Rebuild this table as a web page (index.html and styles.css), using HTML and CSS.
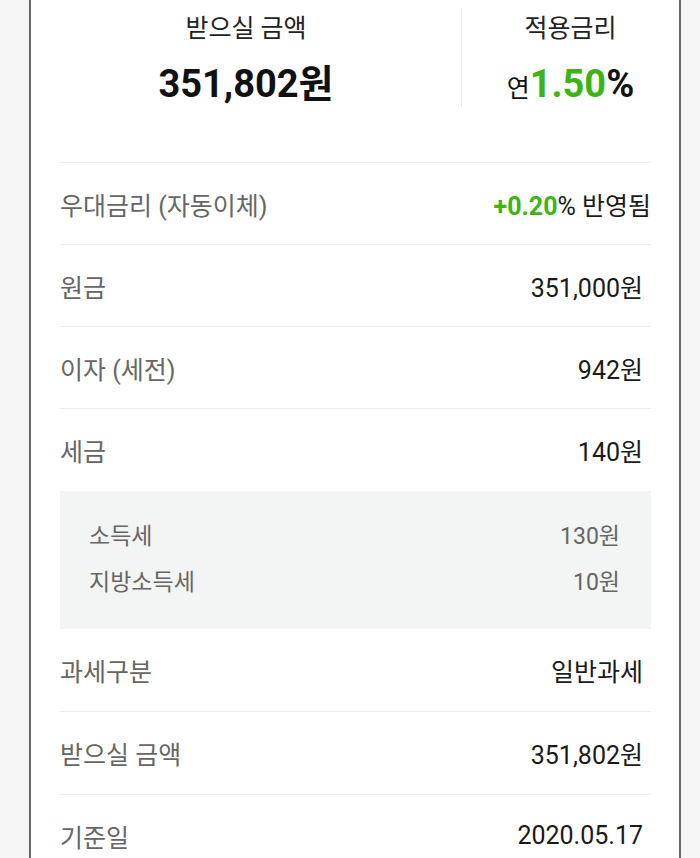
FILE: index.html
```html
<!DOCTYPE html>
<html lang="ko">
<head>
<meta charset="utf-8">
<link rel="stylesheet" href="styles.css">
</head>
<body>
<div class="card">
  <div class="summary">
    <div class="col col-main">
      <div class="col-title">받으실 금액</div>
      <div class="col-value"><span class="big">351,802</span><span class="big-unit">원</span></div>
    </div>
    <div class="col col-rate">
      <div class="col-title">적용금리</div>
      <div class="col-value"><span class="yr">연</span><span class="big green">1.50</span><span class="big">%</span></div>
    </div>
  </div>
  <div class="details">
    <div class="row">
      <span class="label">우대금리 (자동이체)</span>
      <span class="value value-flush"><span class="green-b">+0.20</span>% 반영됨</span>
    </div>
    <div class="row">
      <span class="label">원금</span>
      <span class="value">351,000원</span>
    </div>
    <div class="row">
      <span class="label">이자 (세전)</span>
      <span class="value">942원</span>
    </div>
    <div class="row row-tall">
      <span class="label">세금</span>
      <span class="value">140원</span>
    </div>
    <div class="subbox">
      <div class="subrow"><span>소득세</span><span>130원</span></div>
      <div class="subrow"><span>지방소득세</span><span>10원</span></div>
    </div>
    <div class="row row-noline">
      <span class="label">과세구분</span>
      <span class="value">일반과세</span>
    </div>
    <div class="row row-tall">
      <span class="label">받으실 금액</span>
      <span class="value">351,802원</span>
    </div>
    <div class="row">
      <span class="label">기준일</span>
      <span class="value">2020.05.17</span>
    </div>
  </div>
</div>
</body>
</html>
```
FILE: styles.css
```css
html, body {
  margin: 0;
  padding: 0;
  background: #f5f5f5;
  font-family: Roboto, "Noto Sans CJK KR", sans-serif;
  color: #222;
}

.card {
  margin-left: 29px;
  width: 652px;
  box-sizing: border-box;
  min-height: 900px;
  background: #fff;
  border-left: 2px solid #6a6a6a;
  border-right: 2px solid #6a6a6a;
}

.summary {
  display: grid;
  grid-template-columns: 430px 1fr;
  padding-top: 8px;
  margin-bottom: 55px;
}

.col {
  display: flex;
  flex-direction: column;
  align-items: center;
  padding-top: 6px;
  padding-bottom: 1px;
}

.col-rate {
  border-left: 1px solid #e8e8e8;
}

.col-title {
  font-size: 25px;
  line-height: 30px;
  color: #222;
}

.col-value {
  margin-top: 18px;
  height: 44px;
  line-height: 44px;
  display: flex;
  align-items: baseline;
  white-space: nowrap;
}

.big {
  font-size: 38px;
  font-weight: 700;
  color: #111;
}

.big-unit {
  font-size: 38px;
  font-weight: 700;
  color: #111;
}

.yr {
  font-size: 25px;
  color: #111;
}

.green {
  color: #3db414;
}

.details {
  padding: 0 28px 0 29px;
}

.row {
  height: 82px;
  box-sizing: border-box;
  border-top: 1px solid #eeeeee;
  display: flex;
  align-items: center;
  justify-content: space-between;
  font-size: 25px;
}

.row-tall {
  height: 83px;
}

.row-noline {
  border-top: none;
}

.label {
  color: #666;
}

.value {
  color: #1a1a1a;
  padding-right: 8px;
}

.value-flush {
  padding-right: 0;
}

.green-b {
  color: #3db414;
  font-weight: 700;
}

.subbox {
  background: #f3f4f4;
  padding: 23px 31px 23px 29px;
  font-size: 23px;
  color: #666;
}

.subrow {
  display: flex;
  justify-content: space-between;
  line-height: 46px;
}
```
